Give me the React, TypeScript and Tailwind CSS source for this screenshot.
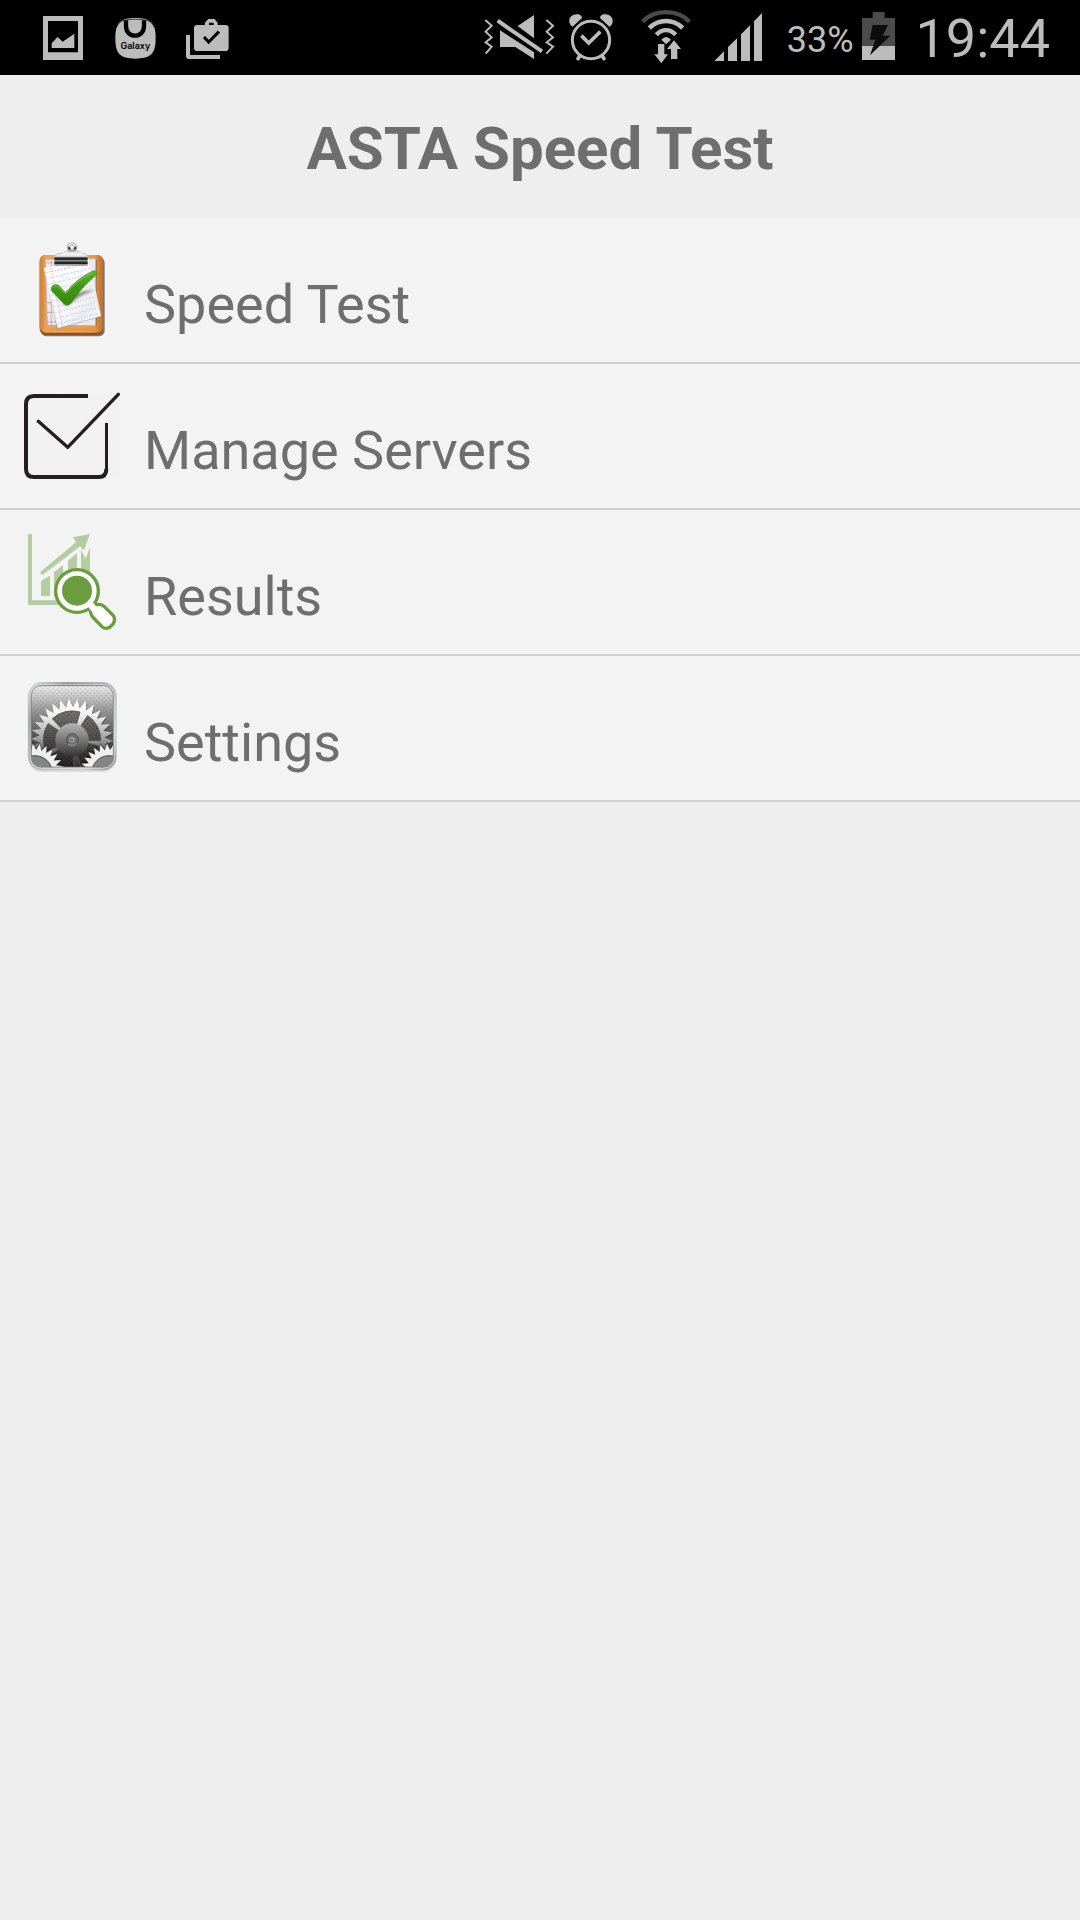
import type { ReactNode } from "react";

const INK = "#bcbcbc";

function gear(cx: number, cy: number, outer: number, root: number, teeth: number, phase = 0) {
  const pts: string[] = [];
  for (let i = 0; i < teeth * 2; i++) {
    const r = i % 2 === 0 ? outer : root;
    const a = phase + (i * Math.PI) / teeth;
    pts.push(`${(cx + r * Math.cos(a)).toFixed(1)} ${(cy + r * Math.sin(a)).toFixed(1)}`);
  }
  return `M${pts.join("L")}Z`;
}

function sector(cx: number, cy: number, r1: number, r2: number, from: number, to: number) {
  const p = (r: number, deg: number) => {
    const a = (deg * Math.PI) / 180;
    return `${(cx + r * Math.cos(a)).toFixed(1)} ${(cy - r * Math.sin(a)).toFixed(1)}`;
  };
  return `M${p(r1, from)}L${p(r2, from)}A${r2} ${r2} 0 0 0 ${p(r2, to)}L${p(r1, to)}A${r1} ${r1} 0 0 1 ${p(r1, from)}Z`;
}

function PictureIcon() {
  return (
    <svg className="h-[75px] w-12" viewBox="120 0 144 225" aria-hidden="true">
      <path fill={INK} fillRule="evenodd" d="M129 48H249V180H129ZM144 63V157H234V63Z" />
      <path fill={INK} d="M155 144V130L173 111L188 125L223 101V144Z" />
    </svg>
  );
}

function GalaxyIcon() {
  return (
    <svg className="h-[75px] w-12" viewBox="336 0 144 225" aria-hidden="true">
      <path fill={INK} d="M346 115C346 70 358 54 406 54S467 70 467 115C467 162 452 176 406 176S346 162 346 115Z" />
      <path fill="none" stroke="#000" strokeWidth="2" d="M350 82C358 62 372 58 406 58S454 62 463 82" />
      <path fill="none" stroke="#000" strokeWidth="13" d="M378 61V78C378 95 389 107 405 107S432 95 432 78V61" />
      <text x="406" y="147" textAnchor="middle" fontFamily="Inter, sans-serif" fontWeight="600" fontSize="27" fill="#000">
        Galaxy
      </text>
    </svg>
  );
}

function BriefcaseIcon() {
  return (
    <svg className="h-[75px] w-12" viewBox="552 0 144 225" aria-hidden="true">
      <path fill={INK} d="M558 105H570V165H660V177H568Q558 177 558 167Z" />
      <path
        fill={INK}
        fillRule="evenodd"
        d="M592 75H615V68L625 57H643L653 68V75H676Q686 75 686 85V143Q686 153 676 153H592Q582 153 582 143V85Q582 75 592 75ZM627 75H641V68H627Z"
      />
      <path fill="none" stroke="#000" strokeWidth="9" d="M612 111L626 126L657 95" />
    </svg>
  );
}

function MuteIcon() {
  return (
    <svg className="h-[75px] w-[72px]" viewBox="72 0 216 225" aria-hidden="true">
      <g fill="none" stroke={INK} strokeWidth="6">
        <path d="M79 60L98 77L80 95L98 112L80 127L98 140L80 161" />
        <path d="M262 60L282 77L263 95L282 112L263 127L282 140L262 161" />
      </g>
      <path fill={INK} d="M176 78L225 45V115ZM123 91L225 157V177L169 141H123Z" />
      <path stroke={INK} strokeWidth="12" d="M116 62L249 154" />
    </svg>
  );
}

function AlarmIcon() {
  return (
    <svg className="h-[75px] w-12" viewBox="324 0 144 225" aria-hidden="true">
      <circle cx="396" cy="120" r="56" fill="none" stroke={INK} strokeWidth="9" />
      <path fill="none" stroke={INK} strokeWidth="11" d="M367 107L389 129L424 95" />
      <path fill={INK} d="M331 67C328 51 343 40 358 43Q369 46 369 54L341 80Q332 75 331 67ZM461 67C464 51 449 40 434 43Q423 46 423 54L451 80Q460 75 461 67Z" />
      <path stroke={INK} strokeWidth="11" strokeLinecap="round" d="M362 168L357 176M430 168L435 176" />
    </svg>
  );
}

function WifiIcon() {
  return (
    <svg className="h-[75px] w-14" viewBox="540 0 168 225" aria-hidden="true">
      <path fill="none" stroke="#4b4b4b" strokeWidth="13" d="M551 65C586 27 656 27 691 65" />
      <g fill="none" stroke={INK}>
        <path strokeWidth="14" d="M571 84C599 56 643 56 671 84" />
        <path strokeWidth="13" d="M592 104C609 86 633 86 650 104" />
      </g>
      <path fill={INK} d="M607 119Q621 103 636 119L621 133Z" />
      <path stroke="#000" strokeWidth="5" fill={INK} paintOrder="stroke" d="M597 132H616V163H627L607 190L586 163H597ZM636 177V147H624L645 121L666 147H655V177Z" />
    </svg>
  );
}

function SignalIcon() {
  return (
    <svg className="h-[75px] w-[52px]" viewBox="756 0 156 225" aria-hidden="true">
      <path fill={INK} d="M766 183L795 154V183ZM807 183V141L834 115V183ZM846 183V103L873 76V183ZM885 183V64L909 39V183Z" />
    </svg>
  );
}

function BatteryIcon() {
  return (
    <svg className="h-[75px] w-[38px]" viewBox="300 0 114 225" aria-hidden="true">
      <path fill="#4b4b4b" d="M338 36H374V54H405V138H306V54H338Z" />
      <path fill={INK} d="M306 138H405V180H306Z" />
      <path fill="#0d0d0d" d="M338 75H384L368 107H391L330 166L346 119H329Z" />
    </svg>
  );
}

function ClipboardIcon() {
  const lines = [0, 1, 2, 3, 4, 5, 6, 7, 8];
  return (
    <svg className="size-24 shrink-0" viewBox="72 96 288 288" aria-hidden="true">
      <defs>
        <linearGradient id="wood" x1="0" y1="0" x2="1" y2="0">
          <stop offset="0" stopColor="#d08135" />
          <stop offset=".1" stopColor="#eaa45a" />
          <stop offset=".85" stopColor="#e49b50" />
          <stop offset="1" stopColor="#bf6f28" />
        </linearGradient>
        <linearGradient id="tick" x1="0" y1="0" x2="0" y2="1">
          <stop offset="0" stopColor="#63b52e" />
          <stop offset=".5" stopColor="#3e9613" />
          <stop offset="1" stopColor="#378a0d" />
        </linearGradient>
        <linearGradient id="clip" x1="0" y1="0" x2="0" y2="1">
          <stop offset="0" stopColor="#fafafa" />
          <stop offset=".25" stopColor="#c9c9c9" />
          <stop offset=".34" stopColor="#1d1d1d" />
          <stop offset=".5" stopColor="#252b2c" />
          <stop offset=".62" stopColor="#8e9595" />
          <stop offset=".78" stopColor="#313131" />
          <stop offset="1" stopColor="#151515" />
        </linearGradient>
        <linearGradient id="sheet" x1="0" y1="0" x2="1" y2="1">
          <stop offset="0" stopColor="#fdfdfd" />
          <stop offset=".55" stopColor="#f8f8f8" />
          <stop offset=".75" stopColor="#ececee" />
          <stop offset="1" stopColor="#ffffff" />
        </linearGradient>
        <filter id="soft" x="-20%" y="-20%" width="140%" height="140%">
          <feGaussianBlur stdDeviation="4" />
        </filter>
      </defs>
      <rect x="123" y="141" width="191" height="238" rx="17" fill="#333" opacity=".65" />
      <rect x="119" y="135" width="190" height="239" rx="17" fill="#8f4c14" />
      <rect x="119" y="135" width="190" height="233" rx="17" fill="url(#wood)" />
      <path fill="none" stroke="#c57a30" strokeWidth="1.5" opacity=".6" d="M127 160V350M132 190V330M301 170V350M297 180V260M150 358H280" />
      <path fill="#7a5a38" opacity=".5" d="M285 150H291V348H285Z" />
      <path fill="#e9e9ee" stroke="#a9a9ae" strokeWidth="2" d="M136 148L287 146V347L142 346Z" />
      <path stroke="#7691df" strokeWidth="2" d="M140 278H160M141 307H160M142 336H170" />
      <path stroke="#e58a82" strokeWidth="2" d="M137 158H160M154 150V345" />
      <path fill="#6b6b6b" opacity=".45" d="M138 180L170 357L182 355L302 320L290 250Z" />
      <path fill="url(#sheet)" stroke="#d2d2d2" strokeWidth="1" d="M132 174L267 145L303 318L173 355Z" />
      <g fill="none" strokeDasharray="4 5" strokeWidth="2.4">
        <path stroke="#e49a9a" d="M139 188L268 159" />
        <path stroke="#e49a9a" d="M153 174L187 347" />
        {lines.map((n) => (
          <path key={n} stroke="#a9b2ee" d={`M${142 + n * 4} ${206 + n * 17}L${270 + n * 3} ${175 + n * 17}`} />
        ))}
      </g>
      <path fill="#333" opacity=".6" filter="url(#soft)" d="M160 246L199 288L240 259L285 238L249 244L202 261Z" />
      <path
        fill="url(#tick)"
        stroke="#357f12"
        strokeWidth="1.5"
        d="M155 230Q166 219 177 227L197 248Q230 206 278 183Q293 179 291 193C258 221 235 247 213 280Q200 291 190 280Q170 256 157 246Q152 239 155 230Z"
      />
      <path fill="none" stroke="#9bd46d" strokeWidth="2" d="M160 232Q167 225 176 232L197 251Q231 211 277 188" />
      <path fill="#f4f4f4" stroke="#9a9a9a" strokeWidth="2" d="M164 139Q166 131 182 131L199 124H234L248 131Q261 131 263 139Z" />
      <circle cx="216" cy="112" r="11" fill="none" stroke="#a6a6a6" strokeWidth="9" />
      <path fill="none" stroke="#f6f6f6" strokeWidth="4" d="M205 108Q216 94 227 108" />
      <circle cx="208" cy="115" r="4" fill="#444" />
      <circle cx="225" cy="115" r="4" fill="#444" />
      <path fill="#e8e8e8" d="M190 125H244L250 131H184Z" />
      <path fill="url(#clip)" d="M163 137Q213 130 263 137V163H163Z" />
      <path fill="#555" opacity=".45" d="M163 163H263V168H163Z" />
    </svg>
  );
}

function CheckBoxIcon() {
  return (
    <svg className="size-24 shrink-0" viewBox="72 54 288 288" aria-hidden="true">
      <defs>
        <pattern id="hatch" width="10" height="10" patternUnits="userSpaceOnUse">
          <path d="M-1 11L11 -1M-1 1L1 -1M9 11L11 9" stroke="#e9eaea" strokeWidth="1.5" />
        </pattern>
      </defs>
      <path fill="url(#hatch)" d="M80 73H358V324H80Z" />
      <g fill="none" stroke="#231f20">
        <path strokeWidth="12" d="M264 78H102Q78 78 78 102V297Q78 321 102 321H296Q319 321 319 297" />
        <path strokeWidth="9" d="M319.500 299V159" />
        <path strokeWidth="10" strokeLinecap="round" strokeLinejoin="round" d="M115 154L203 232L355 73" />
      </g>
    </svg>
  );
}

function ResultsIcon() {
  return (
    <svg className="size-24 shrink-0" viewBox="72 57 288 288" aria-hidden="true">
      <g fill="#b4cca1">
        <path d="M84 57H96V256H200V270H84Z" />
        <path d="M123 198L150 182V243H123ZM162 172L189 150V243H162ZM204 137L231 115V200H204ZM243 104L257 132L270 96V220H243Z" />
        <path d="M120 172L228 82L219 67L270 57L252 106L240 94L127 181Z" />
      </g>
      <g stroke="#6b9c3e" strokeWidth="10" strokeLinejoin="round" fill="#fff">
        <path d="M264 278L281 264L291 269Q305 266 313 275L340 302Q347 312 340 326L327 338Q315 343 306 335L278 306Q271 297 272 289Z" />
        <circle cx="231" cy="228" r="64" />
      </g>
      <path fill="#fff" d="M260 270L275 256L290 278L276 290Z" />
      <circle cx="231" cy="227" r="45" fill="#6b9c3e" />
    </svg>
  );
}

function SettingsIcon() {
  const spokes = [8, 84, 156, 226, 298];
  return (
    <svg className="size-24 shrink-0" viewBox="72 75 288 288" aria-hidden="true">
      <defs>
        <linearGradient id="frame" x1="0" y1="0" x2="1" y2="1">
          <stop offset="0" stopColor="#e2e2e2" />
          <stop offset=".22" stopColor="#8c8f91" />
          <stop offset=".5" stopColor="#b4b7b9" />
          <stop offset=".8" stopColor="#cfd1d2" />
          <stop offset="1" stopColor="#85888a" />
        </linearGradient>
        <linearGradient id="back" x1="0" y1="0" x2="0" y2="1">
          <stop offset="0" stopColor="#efefef" />
          <stop offset=".3" stopColor="#999" />
          <stop offset=".6" stopColor="#5a5a5a" />
          <stop offset="1" stopColor="#2b2b2b" />
        </linearGradient>
        <linearGradient id="steel" gradientUnits="userSpaceOnUse" x1="0" y1="131" x2="0" y2="335">
          <stop offset="0" stopColor="#fff" />
          <stop offset=".25" stopColor="#f0f0f0" />
          <stop offset=".55" stopColor="#aaa" />
          <stop offset=".85" stopColor="#4d4d4d" />
          <stop offset="1" stopColor="#303030" />
        </linearGradient>
        <linearGradient id="hub" x1="0" y1="0" x2="0" y2="1">
          <stop offset="0" stopColor="#b5b5b5" />
          <stop offset=".5" stopColor="#777" />
          <stop offset="1" stopColor="#333" />
        </linearGradient>
        <linearGradient id="hole" gradientUnits="userSpaceOnUse" x1="0" y1="165" x2="0" y2="335">
          <stop offset="0" stopColor="#7a7676" />
          <stop offset=".6" stopColor="#4a4646" />
          <stop offset="1" stopColor="#242222" />
        </linearGradient>
        <pattern id="dots" width="14" height="14" patternUnits="userSpaceOnUse">
          <path fill="#333" opacity=".4" d="M1 2H6L3.500 6ZM8 9H13L10.500 13Z" />
        </pattern>
        <pattern id="darkDots" width="14" height="14" patternUnits="userSpaceOnUse">
          <path fill="#000" opacity=".6" d="M1 2H6L3.500 6ZM8 9H13L10.500 13Z" />
        </pattern>
        <clipPath id="pane">
          <rect x="94" y="92" width="246" height="244" rx="30" />
        </clipPath>
      </defs>
      <rect x="83" y="82" width="268" height="268" rx="43" fill="#d9d9d9" />
      <rect x="85" y="82" width="264" height="264" rx="41" fill="url(#frame)" />
      <rect x="90" y="88" width="254" height="252" rx="35" fill="none" stroke="#e0e1e2" strokeWidth="3" opacity=".7" />
      <g clipPath="url(#pane)">
        <rect x="94" y="92" width="246" height="244" fill="url(#back)" />
        <rect x="94" y="92" width="246" height="244" fill="url(#dots)" />
        <path fill="#222" opacity=".35" d={gear(218, 259, 124, 98, 30, 0.03)} />
        <path fill="url(#steel)" d={gear(216, 255, 124, 98, 30, 0.03)} />
        {spokes.map((s) => (
          <g key={s} stroke="#555" strokeWidth="2">
            <path fill="url(#hole)" d={sector(216, 254, 44, 86, s - 10, s + 49)} />
            <path fill="url(#darkDots)" d={sector(216, 254, 44, 86, s - 10, s + 49)} />
          </g>
        ))}
        <circle cx="216" cy="255" r="50" fill="url(#hub)" />
        <circle cx="217" cy="254" r="18" fill="#6f6f6f" stroke="#4c4c4c" strokeWidth="3" />
        <path fill="none" stroke="#aaa" strokeWidth="3" d="M204 267Q217 277 230 265" />
        <circle cx="216" cy="254" r="8" fill="#a5a5a5" />
        <circle cx="215" cy="255" r="4" fill="#666" />
        {[105, 327].map((cx) => (
          <g key={cx}>
            <path fill="#181818" opacity=".5" d={gear(cx, 345, 86, 66, 26, 0.05)} />
            <path fill="#efefef" d={gear(cx, 351, 86, 66, 26, 0.05)} />
            <circle cx={cx} cy="354" r="52" fill="#858585" stroke="#484848" strokeWidth="3" />
          </g>
        ))}
      </g>
      <rect x="94" y="92" width="246" height="244" rx="30" fill="none" stroke="#777" strokeWidth="2" />
    </svg>
  );
}

const items: { label: string; icon: ReactNode }[] = [
  { label: "Speed Test", icon: <ClipboardIcon /> },
  { label: "Manage Servers", icon: <CheckBoxIcon /> },
  { label: "Results", icon: <ResultsIcon /> },
  { label: "Settings", icon: <SettingsIcon /> },
];

export default function App() {
  return (
    <div className="min-h-screen bg-[#eeeeee] font-['Roboto',sans-serif] text-[#6e6e6e]">
      <div className="flex items-center justify-between bg-black pr-[30px] pl-10 text-[#bcbcbc]">
        <div className="flex gap-6">
          <PictureIcon />
          <GalaxyIcon />
          <BriefcaseIcon />
        </div>
        <div className="flex items-center">
          <div className="flex gap-3">
            <MuteIcon />
            <AlarmIcon />
          </div>
          <div className="ml-6 flex gap-4">
            <WifiIcon />
            <SignalIcon />
          </div>
          <span className="ml-6 pt-1 text-[36px] leading-[42px]">33%</span>
          <div className="ml-1.5">
            <BatteryIcon />
          </div>
          <span className="ml-[18px] pt-0.5 text-[54px] leading-[73px]">19:44</span>
        </div>
      </div>

      <header className="px-6 pt-[38px] pb-[33px] text-center">
        <h1 className="text-[60px] leading-[72px] font-bold">ASTA Speed Test</h1>
      </header>

      <nav aria-label="Main menu">
        <ul>
          {items.map(({ label, icon }) => (
            <li key={label} className="border-b-2 border-[#cfcfcf] bg-[#f3f3f3]">
              <button type="button" className="flex w-full items-end gap-6 p-6 text-left">
                {icon}
                <span className="text-[54px] leading-[66px]">{label}</span>
              </button>
            </li>
          ))}
        </ul>
      </nav>
    </div>
  );
}
